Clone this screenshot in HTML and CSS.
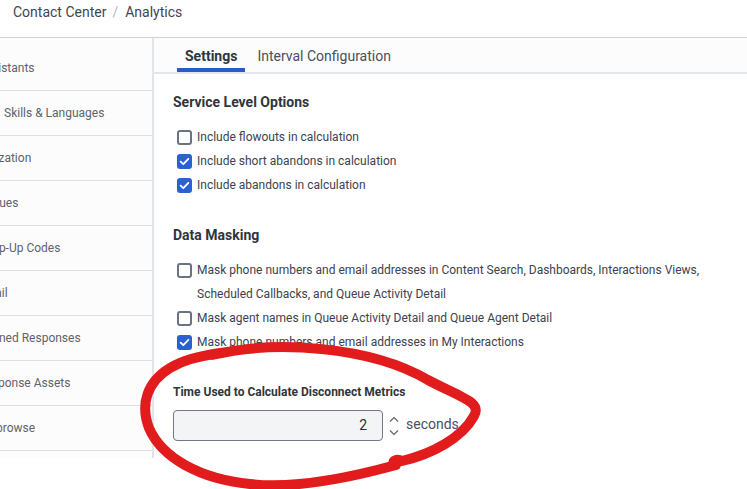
FILE: index.html
```html
<!DOCTYPE html>
<html lang="en">
<head>
<meta charset="utf-8">
<title>Contact Center / Analytics</title>
<link rel="stylesheet" href="styles.css">
</head>
<body>
<header class="topbar">
  <span class="crumb">Contact Center</span>
  <span class="crumb-sep">/</span>
  <span class="crumb">Analytics</span>
</header>
<div class="layout">
  <nav class="sidenav">
    <ul class="nav-list">
      <li class="nav-item">Assistants</li>
      <li class="nav-item nav-item-wide">Skills &amp; Languages</li>
      <li class="nav-item">Utilization</li>
      <li class="nav-item">Queues</li>
      <li class="nav-item">Wrap-Up Codes</li>
      <li class="nav-item">Email</li>
      <li class="nav-item">Canned Responses</li>
      <li class="nav-item">Response Assets</li>
      <li class="nav-item">Co-browse</li>
    </ul>
  </nav>
  <main class="main">
    <div class="tabs">
      <button class="tab tab-active">Settings</button>
      <button class="tab">Interval Configuration</button>
    </div>
    <div class="content">
      <section class="section">
        <h2 class="section-title">Service Level Options</h2>
        <div class="options">
          <label class="check-row"><span class="box"></span><span class="check-label">Include flowouts in calculation</span></label>
          <label class="check-row"><span class="box box-checked"><svg viewBox="0 0 15 15" class="tick"><path d="M3.6 7.6 L6.3 10.2 L11.4 4.8"/></svg></span><span class="check-label">Include short abandons in calculation</span></label>
          <label class="check-row"><span class="box box-checked"><svg viewBox="0 0 15 15" class="tick"><path d="M3.6 7.6 L6.3 10.2 L11.4 4.8"/></svg></span><span class="check-label">Include abandons in calculation</span></label>
        </div>
      </section>
      <section class="section">
        <h2 class="section-title">Data Masking</h2>
        <div class="options">
          <label class="check-row"><span class="box"></span><span class="check-label">Mask phone numbers and email addresses in Content Search, Dashboards, Interactions Views, Scheduled Callbacks, and Queue Activity Detail</span></label>
          <label class="check-row"><span class="box"></span><span class="check-label">Mask agent names in Queue Activity Detail and Queue Agent Detail</span></label>
          <label class="check-row"><span class="box box-checked"><svg viewBox="0 0 15 15" class="tick"><path d="M3.6 7.6 L6.3 10.2 L11.4 4.8"/></svg></span><span class="check-label">Mask phone numbers and email addresses in My Interactions</span></label>
        </div>
      </section>
      <section class="metric">
        <div class="metric-label">Time Used to Calculate Disconnect Metrics</div>
        <div class="metric-row">
          <div class="num-input">2</div>
          <svg class="spinner" viewBox="0 0 12 22" width="12" height="22">
            <polyline points="2,6.5 6,2.5 10,6.5"/>
            <polyline points="2,15.5 6,19.5 10,15.5"/>
          </svg>
          <span class="unit">seconds</span>
        </div>
      </section>
    </div>
  </main>
</div>
<svg class="annotation" viewBox="0 0 747 489" width="747" height="489">
  <path d="M212 355 C 275 340, 370 346, 428 380 C 462 398, 482 402, 474 416 C 462 438, 432 454, 402 461 C 396 458, 390 462, 396 465 C 345 479, 292 489, 250 484 C 200 479, 162 458, 149 428 C 140 404, 147 382, 170 368 C 183 360, 196 357, 220 353"/>
</svg>
</body>
</html>
```

FILE: styles.css
```css
body {
  margin: 0;
  width: 747px;
  height: 489px;
  overflow: hidden;
  position: relative;
  background: #ffffff;
  font-family: Roboto, "Noto Sans", "Liberation Sans", sans-serif;
}

.topbar {
  height: 37px;
  border-bottom: 1px solid #d3d3d3;
  padding: 0 13px;
  display: flex;
  align-items: flex-start;
  font-size: 14px;
  line-height: 24px;
  color: #3f4551;
}

.crumb-sep {
  color: #b3b8c0;
  margin: 0 7px 0 6px;
}

.layout {
  display: flex;
  align-items: flex-start;
}

.sidenav {
  width: 152px;
  flex: none;
  border-right: 2px solid #e1e5eb;
  background: #fcfcfc;
  overflow: hidden;
  padding: 8px 0 7px;
}

.nav-list {
  list-style: none;
  margin: 0 0 0 -38px;
  padding: 0;
}

.nav-item {
  height: 44px;
  border-bottom: 1px solid #dedfe1;
  padding-left: 16px;
  display: flex;
  align-items: center;
  font-size: 12px;
  color: #5d636d;
  white-space: nowrap;
}

.nav-item-wide {
  padding-left: 42px;
}

.main {
  flex: 1;
}

.tabs {
  height: 34px;
  background: #fcfcfc;
  border-bottom: 2px solid #e2e6ec;
  display: flex;
  gap: 4px;
  padding-left: 23px;
}

.tab {
  position: relative;
  border: 0;
  background: none;
  font-family: inherit;
  font-size: 14px;
  color: #4a4f5b;
  padding: 2px 8px 0;
  height: 34px;
}

.tab-active {
  font-weight: 700;
  color: #30353d;
}

.tab-active::after {
  content: "";
  position: absolute;
  left: 0;
  right: 0;
  bottom: 0;
  height: 4px;
  background: #2b5cc5;
}

.content {
  padding: 18px 19px 0;
}

.section + .section {
  margin-top: 28px;
}

.section-title {
  margin: 0 0 13px;
  font-size: 14px;
  line-height: 20px;
  font-weight: 700;
  color: #30353d;
}

.options {
  display: flex;
  flex-direction: column;
}

.check-row {
  display: flex;
  align-items: flex-start;
  gap: 5px;
  padding-left: 4px;
  font-size: 12px;
  line-height: 24px;
  color: #3d4250;
}

.check-label {
  max-width: 530px;
}

.box {
  width: 15px;
  height: 15px;
  box-sizing: border-box;
  border: 2px solid #6b7383;
  border-radius: 3px;
  margin-top: 4.5px;
  flex: none;
  background: #ffffff;
  display: flex;
}

.box-checked {
  background: #2a61d1;
  border: 0;
}

.tick {
  width: 15px;
  height: 15px;
  fill: none;
  stroke: #ffffff;
  stroke-width: 1.8;
  stroke-linecap: round;
  stroke-linejoin: round;
}

.metric {
  margin-top: 30px;
}

.metric-label {
  font-size: 12px;
  font-weight: 700;
  line-height: 16px;
  color: #30353d;
  margin-bottom: 10px;
}

.metric-row {
  display: flex;
  align-items: center;
}

.num-input {
  width: 210px;
  height: 31px;
  box-sizing: border-box;
  border: 1px solid #717887;
  border-radius: 4px;
  background: #f3f4f6;
  text-align: right;
  padding: 0 15px;
  font-size: 14px;
  line-height: 29px;
  color: #2b2f36;
}

.spinner {
  margin-left: 5px;
  fill: none;
  stroke: #5a606b;
  stroke-width: 1.1;
}

.unit {
  margin-left: 6px;
  margin-bottom: 4px;
  font-size: 14px;
  color: #4a4f5b;
}

.annotation {
  position: absolute;
  left: 0;
  top: 0;
  pointer-events: none;
  fill: none;
  stroke: #e21b1d;
  stroke-width: 10;
  stroke-linecap: round;
  stroke-linejoin: round;
}
```
